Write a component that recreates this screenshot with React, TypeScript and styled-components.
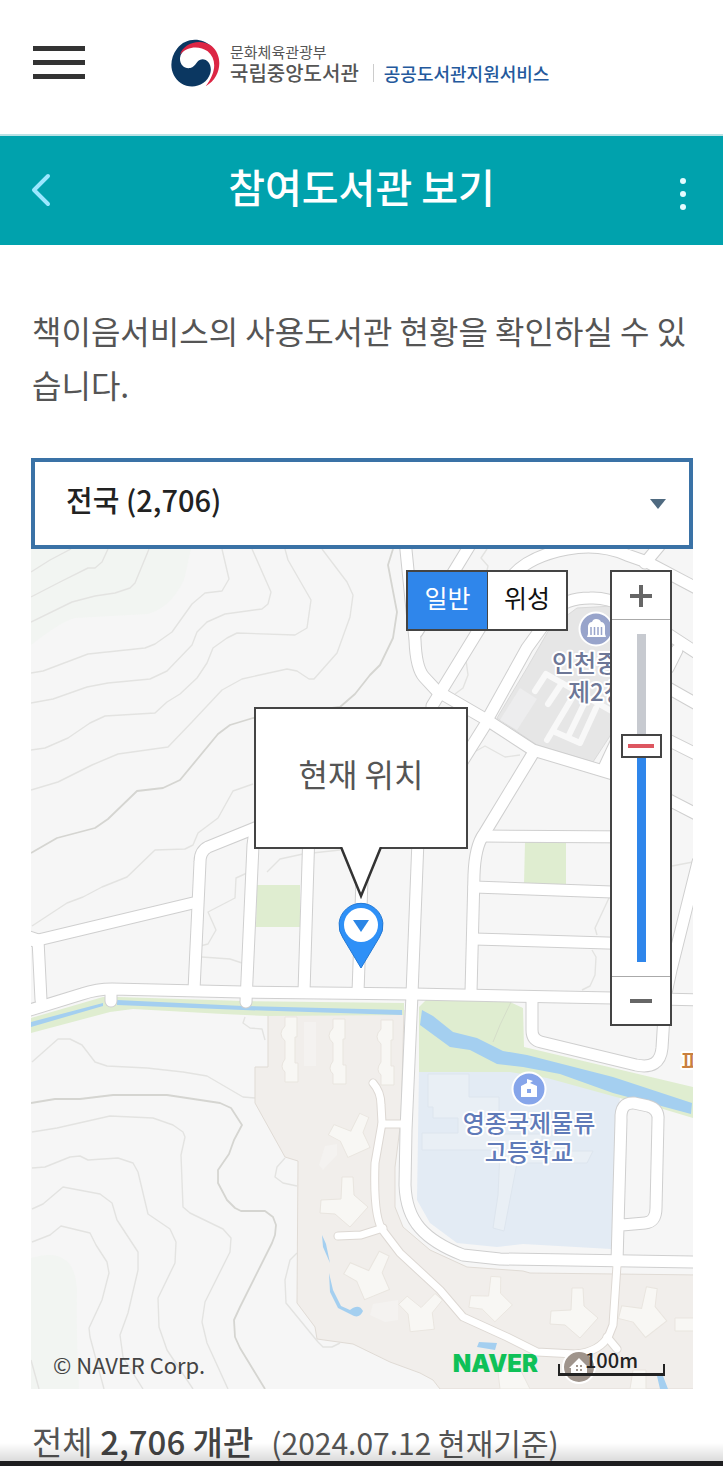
import React, { useState } from "react";
import styled, { createGlobalStyle } from "styled-components";

const GlobalStyle = createGlobalStyle`
  *, *::before, *::after { box-sizing: border-box; }
  body {
    margin: 0;
    background: #fff;
    color: #555;
    font-family: "Noto Sans CJK KR", "Noto Sans", sans-serif;
  }
  button, select, input { font: inherit; margin: 0; }
`;

const Header = styled.header`
  display: grid;
  grid-template-columns: 138px 1fr;
  align-items: center;
  height: 136px;
  padding: 0 33px 8px;
  border-bottom: 2px solid #b9e2e5;
`;

const IconButton = styled.button`
  display: flex;
  padding: 0;
  border: 0;
  background: none;
  cursor: pointer;
`;

const Brand = styled.a`
  display: flex;
  align-items: center;
  gap: 10px;
  color: #555;
  text-decoration: none;
  white-space: nowrap;
`;

const BrandText = styled.span`
  display: grid;
  grid-template-columns: auto auto;
  align-items: center;
`;

const Ministry = styled.span`
  grid-column: 1 / -1;
  font-size: 15px;
  line-height: 20px;
`;

const Library = styled.span`
  font-size: 20px;
  font-weight: 500;
  line-height: 22px;
`;

const Service = styled.span`
  margin-left: 14px;
  padding-left: 10px;
  border-left: 1px solid #ccc;
  color: #24599c;
  font-size: 18px;
  font-weight: 500;
  line-height: 18px;
`;

const TitleBar = styled.div`
  display: grid;
  grid-template-columns: 24px 1fr 24px;
  align-items: center;
  height: 109px;
  padding: 0 31px 2px 28px;
  background: #00a2ad;
`;

const Title = styled.h1`
  margin: 0;
  padding: 0 0 8px 3px;
  color: #fff;
  font-size: 40px;
  font-weight: 500;
  line-height: 60px;
  text-align: center;
`;

const Main = styled.main`
  padding: 58px 30px 0 31px;
`;

const Intro = styled.p`
  margin: 0 0 47px;
  padding-left: 1px;
  font-size: 32px;
  line-height: 54px;
`;

const SelectBox = styled.div`
  display: grid;
  align-items: center;
  & > * { grid-area: 1 / 1; }
  & > svg { justify-self: end; margin-right: 27px; pointer-events: none; }
`;

const RegionSelect = styled.select`
  width: 100%;
  height: 91px;
  padding: 0 60px 10px 31px;
  border: 4px solid #3a72a6;
  border-radius: 0;
  background: #fff;
  color: #222;
  font-size: 29px;
  font-weight: 500;
  appearance: none;
  outline: none;
`;

const MapPanel = styled.section`
  position: relative;
  aspect-ratio: 331 / 420;
  overflow: hidden;
  background: #f6f6f6;
`;

const MapCanvas = styled.svg`
  display: block;
  width: 100%;
  height: 100%;
`;

const MapTypes = styled.div`
  position: absolute;
  top: 21px;
  right: 125px;
  display: flex;
  border: 2px solid #444;
  background: #fff;
`;

const MapTypeButton = styled.button<{ $active: boolean }>`
  width: 79px;
  height: 57px;
  padding: 0 0 8px;
  border: 0;
  background: ${(p) => (p.$active ? "#2f86eb" : "#fff")};
  color: ${(p) => (p.$active ? "#fff" : "#111")};
  font-size: 25px;
  cursor: pointer;
  & + & { border-left: 1px solid #444; }
`;

const ZoomPanel = styled.div`
  position: absolute;
  top: 21px;
  right: 21px;
  display: flex;
  flex-direction: column;
  align-items: center;
  width: 62px;
  border: 2px solid #444;
  background: #fff;
`;

const ZoomButton = styled.button`
  display: flex;
  align-items: center;
  justify-content: center;
  width: 100%;
  height: 47px;
  padding: 0;
  border: 0;
  background: #fff;
  cursor: pointer;
`;

const SliderSlot = styled.div`
  display: flex;
  justify-content: center;
  width: 100%;
  padding: 14px 0;
  border: solid #aaa;
  border-width: 1px 0;
`;

const ZoomSlider = styled.input`
  width: 41px;
  height: 328px;
  appearance: none;
  writing-mode: vertical-lr;
  direction: rtl;
  background: linear-gradient(#c7cad0 calc(100% - var(--level)), #2f86eb 0) center / 9px 100% no-repeat;
  &::-webkit-slider-thumb {
    appearance: none;
    width: 41px;
    height: 24px;
    border: 2px solid #444;
    background: linear-gradient(#dd5660, #dd5660) center / 26px 4px no-repeat #fff;
  }
`;

const Position = styled.div`
  position: absolute;
  top: 158px;
  left: 50%;
  display: flex;
  flex-direction: column;
  align-items: center;
  transform: translateX(-50%);
  padding-right: 2px;
`;

const Callout = styled.div`
  display: flex;
  align-items: center;
  justify-content: center;
  width: 214px;
  height: 142px;
  padding-bottom: 10px;
  border: 2px solid #444;
  background: #fff;
  color: #555;
  font-size: 32px;
`;

const CalloutTail = styled.svg`
  margin: -2px 0 3px;
`;

const MapFooter = styled.div`
  position: absolute;
  right: 28px;
  bottom: 11px;
  left: 22px;
  display: flex;
  align-items: center;
`;

const Copyright = styled.small`
  flex: 1;
  color: #444;
  font-size: 22px;
  line-height: 28px;
`;

const Naver = styled.a`
  margin-right: 20px;
  color: #0fc158;
  font-family: Inter, sans-serif;
  font-size: 24px;
  font-weight: 900;
  line-height: 28px;
  text-decoration: none;
`;

const Scale = styled.span`
  width: 107px;
  height: 28px;
  color: #222;
  font-size: 20px;
  font-weight: 500;
  line-height: 20px;
  text-align: center;
  background:
    linear-gradient(#222, #222) left bottom 2px / 2px 12px no-repeat,
    linear-gradient(#222, #222) right bottom 2px / 2px 12px no-repeat,
    linear-gradient(#222, #222) left bottom 2px / 100% 3px no-repeat;
`;

const Summary = styled.p`
  display: flex;
  align-items: baseline;
  gap: 18px;
  height: 48px;
  margin: 28px 0 0;
  padding-left: 1px;
  overflow: hidden;
  font-size: 33px;
  line-height: 48px;
  white-space: nowrap;
  strong { font-weight: 500; color: #444; }
`;

const BaseDate = styled.span`
  font-size: 30px;
`;

const BottomEdge = styled.div`
  position: fixed;
  right: 0;
  bottom: 0;
  left: 0;
  height: 23px;
  border-bottom: 5px solid #1d1d1f;
  background: linear-gradient(rgba(0, 0, 0, 0), rgba(0, 0, 0, 0.14));
  pointer-events: none;
`;

const contours = [
  "31,572 50,560 71,549",
  "31,597 60,582 88,568 95,568 102,562 108,549",
  "31,622 72,602 95,596 115,593 130,588 135,583 149,549",
  "31,673 43,671 88,654 145,648 155,644 172,632 192,604 205,593 222,591 229,579 222,549",
  "31,703 53,699 87,687 108,683 150,679 167,671 192,645 197,632 207,622 225,614 262,609 268,604 271,592 252,549",
  "31,750 45,748 68,738 90,723 105,716 155,713 167,702 180,694 197,678 207,663 213,648 227,638 237,633 295,635 307,628 311,600 288,560 285,549",
  "31,790 58,782 92,765 118,754 168,747 192,722 222,690 242,679 287,669 297,671 309,679 314,679 337,653 350,617 353,595 347,582 322,549",
  "32,926 67,903 83,897 102,887 127,877 155,850 185,849 193,845 198,833 218,818 233,791 253,784",
  "200,946 208,944 216,930 208,912 235,898 236,878 247,873",
  "267,872 280,859 303,854 340,850",
  "202,957 230,959 242,963",
  "32,1062 58,1039 70,1039 82,1045 95,1062 107,1066 147,1068 183,1072 207,1076 243,1097 255,1098",
  "32,1132 57,1128 110,1116 153,1118 173,1125 183,1132 185,1137 181,1155 183,1207 190,1213 223,1229 231,1238 230,1252 205,1302 202,1322 207,1343 228,1389",
  "32,1168 45,1167 70,1157 80,1156 88,1160 118,1158 133,1163 138,1172 148,1214 170,1229 176,1242 175,1263 158,1298 159,1327 167,1350 193,1389",
  "32,1209 43,1204 63,1187 100,1194 112,1203 117,1220 138,1252 138,1270 128,1313 120,1335 123,1357 143,1389",
  "32,1242 50,1235 61,1226 90,1233 96,1245 107,1262 109,1273 102,1300 89,1328 90,1337 104,1389",
  "31,1360 39,1389",
  "285,1158 277,1167 275,1177 283,1183 297,1186",
  "297,1253 290,1260 285,1280 286,1303 318,1342 323,1347 332,1347 340,1343",
  "245,1017 243,1023 250,1028 262,1029 265,1040",
  "487,549 481,558 488,566 486,575",
  "466,660 468,675 463,688 455,694",
  "467,756 485,746 505,757 520,755",
  "609,898 595,928 597,935",
  "592,950 596,957 595,975 590,986 582,990",
  "672,866 693,862",
];

const mainContours = [
  "31,853 57,838 95,828 108,819 137,791 163,788 180,780 218,734 230,725 253,718 340,707 355,694 370,675 380,665 393,638 397,612 388,565 393,549",
  "31,1103 55,1099 80,1099 113,1095 167,1095 220,1103 231,1108 242,1125 234,1140 229,1154 218,1170 218,1183 227,1200 235,1208 241,1211 265,1211 273,1217 276,1225 275,1235 272,1243 240,1307 234,1320 235,1337 240,1348 265,1389",
];

const roads = [
  "M20 1013 L82 994 Q97 989 112 989 L243 992 L413 994 L613 998 L700 1000",
  "M26 936 L38 940 L41 1000",
  "M34 941 L193 903",
  "M194 990 L198 905 L200 862 Q200 851 208 847 L260 826",
  "M255 830 L253 845 L246 1002",
  "M309 830 L304 992",
  "M362 880 L358 992",
  "M418 840 L412 994 L406 1130 L405 1185 Q406 1212 420 1228 T463 1255 L500 1259 L700 1262",
  "M471 992 L474 875 Q475 846 484 834 L532 755",
  "M111 990 L111 1001",
  "M483 836 L640 837",
  "M474 887 L640 893",
  "M474 939 L640 944",
  "M405 540 L415 640 Q416 668 424 677 L437 691 L487 720 L533 750 L613 774 L640 785 L700 816",
  "M470 545 L417 632",
  "M432 706 L478 631 L513 575 Q530 556 567 549 Q600 543 627 555 L647 562 L700 590",
  "M645 563 L660 545",
  "M487 720 L527 648 L553 612 Q565 598 590 598 Q606 597 625 606 L700 655",
  "M487 722 L462 762",
  "M604 768 L618 738",
  "M640 672 L700 706",
  "M640 726 L700 756",
  "M677 650 L668 668",
  "M698 862 L671 970 L665 998",
  "M532 998 L532 1030 Q532 1040 541 1042 L636 1065 Q660 1070 662 1048 L665 1000",
  "M617 1262 L621 1120 Q620 1102 634 1103 L648 1106 Q659 1109 658 1120 L656 1208 Q656 1222 645 1223 L622 1225",
];

const lanes = [
  "M373 1083 Q381 1092 381 1105 L382 1123 L375 1163 Q373 1220 384 1232 L400 1253 L440 1290 L463 1317 L507 1337 L537 1352 L575 1354 Q600 1352 609 1335 L613 1325 L617 1265",
  "M338 1236 L361 1235 L383 1228",
  "M382 1124 L404 1124",
  "M607 1337 L617 1349",
];

const towers = [
  { x: 353, y: 1135, turn: 24, size: 0.9 },
  { x: 345, y: 1202, turn: 0, size: 1 },
  { x: 371, y: 1275, turn: 26, size: 1 },
  { x: 422, y: 1312, turn: 42, size: 0.9 },
  { x: 492, y: 1299, turn: 4, size: 0.9 },
  { x: 575, y: 1313, turn: 0, size: 1 },
  { x: 645, y: 1312, turn: 10, size: 1 },
];

const slabs = [
  { x: 285, y: 1017 },
  { x: 333, y: 1019 },
  { x: 381, y: 1020 },
];

function Emblem() {
  return (
    <svg width="49" height="48" viewBox="0 0 147 142" aria-hidden="true">
      <path fill="#0b3761" d="M122 22C94-5 46-8 18 28C-8 62-4 108 30 132C62 152 106 140 118 102C124 80 112 60 94 60C76 61 76 82 58 86C40 89 26 76 27 56C30 24 80 4 122 22Z" />
      <path fill="#dc2644" d="M27 46C36 12 88 -6 122 20C156 48 154 112 104 141C136 98 138 60 110 36C86 18 48 20 27 46Z" />
    </svg>
  );
}

function MapDrawing() {
  return (
    <MapCanvas viewBox="31 549 662 840" preserveAspectRatio="xMidYMid slice" role="img" aria-label="지도">
      <rect x="31" y="549" width="662" height="840" fill="#f6f6f6" />
      <path fill="#f2f5f2" d="M31 549H191L184 580Q170 608 148 614L75 618Q60 622 31 645ZM31 1258Q75 1245 77 1290Q76 1330 79 1389H31Z" />
      <g fill="none" stroke="#e3e3e1" strokeWidth="1.4" strokeLinejoin="round">
        {contours.map((points) => <polyline key={points} points={points} />)}
      </g>
      <g fill="none" stroke="#d5d5d1" strokeWidth="1.8" strokeLinejoin="round">
        {mainContours.map((points) => <polyline key={points} points={points} />)}
      </g>

      <path fill="#f1eeeb" stroke="#e0dbd5" d="M268 1012V1067H255V1103L285 1157L298 1161L297 1303L315 1327L317 1339L353 1344L390 1362L420 1373L433 1380L440 1389H700V1275L530 1273L523 1271L467 1267L430 1250L403 1227L395 1207V1167L401 1120L404 1010Z" />
      <g fill="#f8f7f4" stroke="#e9e5df">
        {slabs.map(({ x, y }) => (
          <path key={x} transform={`translate(${x} ${y})`} d="M0 0H12V20H10V46H13V65H0V55Q-6 50 0 42V24Q-8 17 0 9Z" />
        ))}
        {towers.map(({ x, y, turn, size }) => (
          <path key={`${x}-${y}`} transform={`translate(${x} ${y}) rotate(${turn}) scale(${size})`} d="M-3-25L8-25L9-7L23 5L5 25L-10 12L-25 11L-24-2L-4-3Z" />
        ))}
        <path d="M675 1318H700V1331H675ZM498 1372L518 1365L530 1389H500ZM633 1370H646V1389H630Z" />
      </g>
      <path fill="#f4f2f0" d="M304 1022H316V1066H304ZM325 1146L337 1144L337 1155L323 1170L319 1165ZM373 1304L398 1300V1320L385 1322L370 1315Z" />

      <path fill="#e6e6e6" stroke="#dadada" d="M577 608L613 606H640V690L593 762L537 745L497 718L527 668L550 628Z" />
      <path fill="#ededee" d="M520 688L537 699L517 730L500 720Z" />
      <g fill="none" stroke="#f8f8f8" strokeWidth="6" strokeLinecap="round" strokeLinejoin="round">
        <path d="M535 691L546 674L615 713M548 704L562 683M547 740L572 698M555 732L580 743L596 708M568 737L584 704" />
      </g>

      <path fill="#e3ebf4" d="M419 1070H560L620 1095L611 1249L523 1244L497 1247L457 1243L430 1223L417 1200Z" />
      <g fill="#e9eff5" stroke="#dde5ee">
        <path d="M428 1074H469V1097H499V1134H542V1150H422V1133H458V1118H433V1107H428Z" />
        <path d="M500 1151H593L587 1163H517L504 1231L493 1228L496 1208L498 1195Z" />
      </g>
      <g fill="#dfedd0">
        <path d="M257 885H300V927H256ZM525 842H566V884H524Z" />
        <path d="M31 1018L103 997H118L243 1001L404 1003V1015L268 1016L223 1014L133 1009L110 1012L31 1033Z" />
        <path d="M419 1007L427 999L510 1002L523 1008L524 1047L613 1068L693 1087V1118L663 1109L627 1100L547 1078L510 1072H419Z" />
      </g>
      <g fill="#a4cff0">
        <path d="M31 1022L103 1003V1006L31 1027ZM117 1000L243 1006L402 1010V1015L243 1010L117 1005Z" />
        <path d="M422 1010L433 1016L453 1032L477 1038L503 1051L527 1055L613 1077L692 1103L691 1114L613 1093L560 1074L523 1067L497 1064L470 1050L450 1047L420 1025Z" />
        <path d="M322 1235L326 1244L330 1263L323 1247ZM329 1273L333 1290L341 1306L350 1310Q359 1303 363 1311Q360 1318 354 1316L338 1308L330 1292ZM479 1342L497 1343L495 1350L477 1347ZM657 1376H663L668 1389H660Z" />
      </g>
      <path d="M511 1002L500 1025L493 1042" fill="none" stroke="#d5ddc9" />

      <g fill="none" strokeLinejoin="round">
        <g stroke="#cfcfcf" strokeWidth="13" strokeLinecap="round">{roads.map((d) => <path key={d} d={d} />)}</g>
        <g stroke="#ddd8d3" strokeWidth="9" strokeLinecap="round">{lanes.map((d) => <path key={d} d={d} />)}</g>
        <g stroke="#fff" strokeWidth="11" strokeLinecap="round">{roads.map((d) => <path key={d} d={d} />)}</g>
        <g stroke="#fff" strokeWidth="7" strokeLinecap="round">{lanes.map((d) => <path key={d} d={d} />)}</g>
      </g>

      <circle cx="596" cy="629" r="16.5" fill="#98a4cb" stroke="#fff" strokeWidth="2" />
      <path fill="#fff" d="M588 626Q589 622 592 622Q593 619 596 619Q600 619 601 622Q604 622 605 626V634L606 637H587L588 634Z" />
      <path stroke="#98a4cb" strokeWidth="1.5" d="M591 627V635M594.500 627V635M598 627V635M601.500 627V635" />
      <circle cx="529" cy="1089" r="16.5" fill="#86a5ea" stroke="#fff" strokeWidth="2" />
      <path fill="#fff" d="M521 1086L527 1083V1079L533 1081L530 1083L537 1086V1097H521Z" />
      <rect x="527" y="1089" width="4" height="4" fill="#86a5ea" />
      <circle cx="579" cy="1367" r="16" fill="#9f948c" stroke="#fff" strokeWidth="2" />
      <path fill="#fff" d="M569 1368L579 1358L589 1368H587V1376H571V1368Z" />
      <path fill="#9f948c" d="M576 1365h2v2h-2zM580 1365h2v2h-2zM576 1369h2v2h-2zM580 1369h2v2h-2z" />

      <g fontSize="24" fontWeight="500" textAnchor="middle" stroke="#fff" strokeWidth="4" strokeLinejoin="round" paintOrder="stroke">
        <g fill="#6d7797">
          <text x="552" y="672" textAnchor="start">인천중부</text>
          <text x="568" y="701" textAnchor="start">제2청사</text>
        </g>
        <g fill="#5f7ab8">
          <text x="529" y="1132">영종국제물류</text>
          <text x="529" y="1161">고등학교</text>
        </g>
        <text x="681" y="1071" fontSize="24" textAnchor="start" fill="#c9803f">피</text>
      </g>
    </MapCanvas>
  );
}

export default function App() {
  const [mapType, setMapType] = useState("일반");
  const [zoom, setZoom] = useState(67);

  return (
    <>
      <GlobalStyle />
      <Header>
        <IconButton aria-label="메뉴">
          <svg width="52" height="34" viewBox="0 0 52 34" fill="#333">
            <path d="M0 0H52V5H0ZM0 14H52V19H0ZM0 28H52V33H0Z" />
          </svg>
        </IconButton>
        <Brand href="#">
          <Emblem />
          <BrandText>
            <Ministry>문화체육관광부</Ministry>
            <Library>국립중앙도서관</Library>
            <Service>공공도서관지원서비스</Service>
          </BrandText>
        </Brand>
      </Header>
      <TitleBar>
        <IconButton aria-label="뒤로">
          <svg width="24" height="34" viewBox="0 0 24 34" fill="none" stroke="#9be7ff" strokeWidth="4" strokeLinecap="round" strokeLinejoin="round">
            <path d="M20 3L6 17L20 31" />
          </svg>
        </IconButton>
        <Title>참여도서관 보기</Title>
        <IconButton aria-label="더보기">
          <svg width="24" height="40" viewBox="0 0 24 40" fill="#e4fbff">
            <circle cx="15" cy="11" r="3" />
            <circle cx="15" cy="24" r="3" />
            <circle cx="15" cy="37" r="3" />
          </svg>
        </IconButton>
      </TitleBar>
      <Main>
        <Intro>책이음서비스의 사용도서관 현황을 확인하실 수 있습니다.</Intro>
        <SelectBox>
          <RegionSelect aria-label="지역">
            <option>전국 (2,706)</option>
          </RegionSelect>
          <svg width="16" height="10" viewBox="0 0 16 10" aria-hidden="true">
            <path d="M0 0H16L8 10Z" fill="#4f6a80" />
          </svg>
        </SelectBox>
        <MapPanel>
          <MapDrawing />
          <Position>
            <Callout>현재 위치</Callout>
            <CalloutTail width="44" height="52" viewBox="0 0 44 52">
              <path d="M2 0L22 49L42 0" fill="#fff" stroke="#333" strokeWidth="2.5" />
            </CalloutTail>
            <svg width="46" height="68" viewBox="0 0 46 68">
              <path d="M23 66L5 36A22 22 0 1 1 41 36Z" fill="#2e90f7" stroke="#2479d4" />
              <circle cx="23" cy="23" r="17" fill="#fff" />
              <path d="M15 18H31L23 30Z" fill="#2b86e6" />
            </svg>
          </Position>
          <MapTypes>
            {["일반", "위성"].map((name) => (
              <MapTypeButton key={name} $active={name === mapType} aria-pressed={name === mapType} onClick={() => setMapType(name)}>
                {name}
              </MapTypeButton>
            ))}
          </MapTypes>
          <ZoomPanel>
            <ZoomButton aria-label="확대" onClick={() => setZoom(Math.min(100, zoom + 7))}>
              <svg width="22" height="22" viewBox="0 0 22 22" fill="#666">
                <path d="M9 0H13V9H22V13H13V22H9V13H0V9H9Z" />
              </svg>
            </ZoomButton>
            <SliderSlot>
              <ZoomSlider
                type="range"
                aria-label="지도 확대 단계"
                value={zoom}
                onChange={(e) => setZoom(Number(e.target.value))}
                style={{ "--level": `${zoom}%` } as React.CSSProperties}
              />
            </SliderSlot>
            <ZoomButton aria-label="축소" onClick={() => setZoom(Math.max(0, zoom - 7))}>
              <svg width="22" height="4" viewBox="0 0 22 4" fill="#666">
                <path d="M0 0H22V4H0Z" />
              </svg>
            </ZoomButton>
          </ZoomPanel>
          <MapFooter>
            <Copyright>© NAVER Corp.</Copyright>
            <Naver href="#">NAVER</Naver>
            <Scale>100m</Scale>
          </MapFooter>
        </MapPanel>
        <Summary>
          <span>전체 <strong>2,706 개관</strong></span>
          <BaseDate>(2024.07.12 현재기준)</BaseDate>
        </Summary>
      </Main>
      <BottomEdge />
    </>
  );
}
